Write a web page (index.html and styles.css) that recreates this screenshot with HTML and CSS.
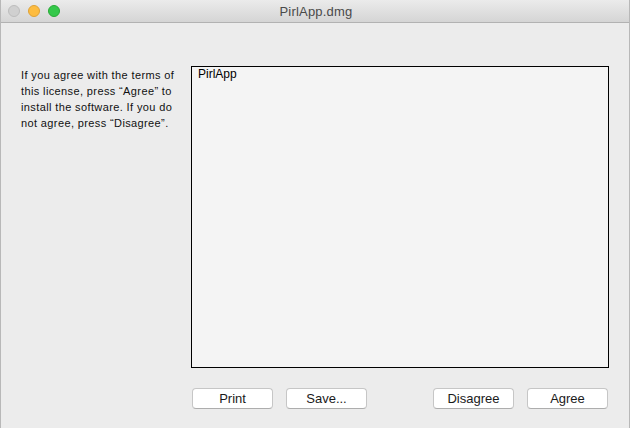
FILE: index.html
```html
<!DOCTYPE html>
<html>
<head>
<meta charset="utf-8">
<link rel="stylesheet" href="styles.css">
</head>
<body>
<div class="window">
  <div class="titlebar">
    <div class="lights">
      <span class="light close"></span>
      <span class="light min"></span>
      <span class="light max"></span>
    </div>
    <div class="title">PirlApp.dmg</div>
  </div>
  <div class="content">
    <div class="main">
      <p class="info">If you agree with the terms of this license, press “Agree” to install the software. If you do not agree, press “Disagree”.</p>
      <div class="license">PirlApp</div>
    </div>
    <div class="buttons">
      <div class="group">
        <button class="btn">Print</button>
        <button class="btn">Save...</button>
      </div>
      <div class="group">
        <button class="btn">Disagree</button>
        <button class="btn">Agree</button>
      </div>
    </div>
  </div>
</div>
</body>
</html>
```
FILE: styles.css
```css
* { box-sizing: border-box; }
html, body { margin: 0; padding: 0; }
body {
  width: 630px;
  height: 428px;
  font-family: "Liberation Sans", Arial, sans-serif;
  background: #ececec;
  overflow: hidden;
}
.window {
  width: 630px;
  height: 428px;
  display: flex;
  flex-direction: column;
  background: #ececec;
  border-left: 1px solid #b8b8b8;
  border-right: 1px solid #b8b8b8;
}
.titlebar {
  height: 23px;
  flex: none;
  position: relative;
  display: flex;
  align-items: center;
  justify-content: center;
  background: linear-gradient(#ebebeb, #d5d5d5);
  border-bottom: 1px solid #b2b2b2;
}
.lights {
  position: absolute;
  left: 7px;
  top: 5px;
  display: flex;
  gap: 8px;
}
.light {
  width: 12px;
  height: 12px;
  border-radius: 50%;
  display: block;
}
.close { background: #d0d0d0; border: 1px solid #bdbdbd; }
.min { background: #fdbc40; border: 1px solid #dea236; }
.max { background: #34c84a; border: 1px solid #27aa35; }
.title {
  font-size: 13px;
  color: #4a4a4a;
  padding-left: 2px;
  letter-spacing: 0.2px;
}
.content {
  flex: 1;
  display: flex;
  flex-direction: column;
  padding: 43px 20px 0 20px;
}
.main {
  display: flex;
  gap: 13px;
}
.info {
  margin: 0;
  width: 157px;
  font-size: 11px;
  line-height: 16px;
  color: #111;
  padding-top: 1px;
  letter-spacing: 0.38px;
}
.license {
  width: 418px;
  height: 302px;
  border: 1px solid #000;
  background: #f4f4f4;
  font-size: 12px;
  color: #000;
  padding: 0 0 0 6px;
  line-height: 14px;
}
.buttons {
  display: flex;
  justify-content: space-between;
  padding: 20px 1px 0 171px;
}
.group {
  display: flex;
  gap: 13px;
}
.btn {
  width: 81px;
  height: 21px;
  font-family: "Liberation Sans", Arial, sans-serif;
  font-size: 13px;
  color: #1a1a1a;
  background: #fff;
  border: 1px solid #c6c6c6;
  border-bottom-color: #adadad;
  border-radius: 4px;
  padding: 0;
  line-height: 19px;
}
```
